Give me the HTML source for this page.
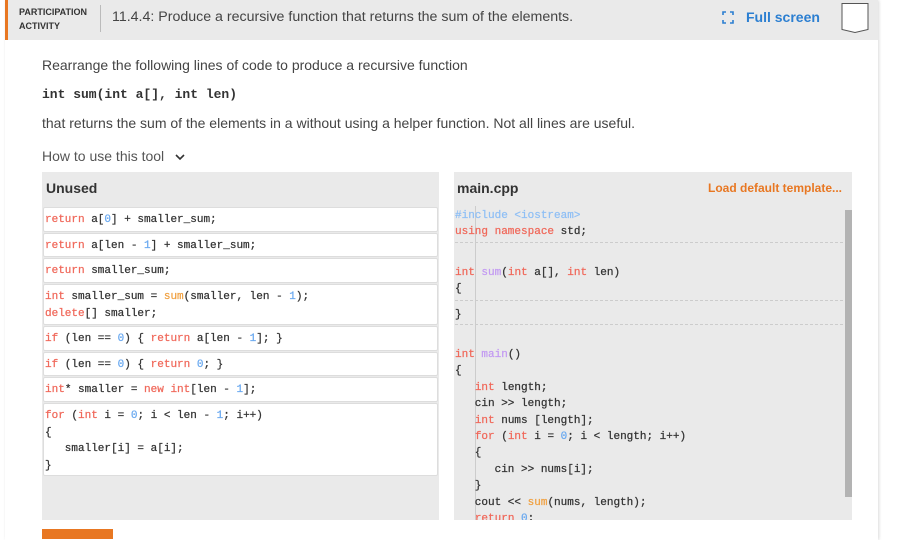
<!DOCTYPE html>
<html><head><meta charset="utf-8"><style>
*{margin:0;padding:0;box-sizing:border-box}
body{width:897px;height:536px;background:#fff;font-family:"Liberation Sans",sans-serif;position:relative;overflow:hidden;color:#333}
.card{position:absolute;left:5px;top:0;width:873px;height:540px;background:#fff;box-shadow:1px 0 3px rgba(0,0,0,.15)}
.hdr{position:absolute;left:5px;top:0;width:873px;height:40px;background:#eaeaea;border-left:3px solid #e87722}
.pa{position:absolute;left:19px;top:5px;font-size:9px;font-weight:bold;line-height:14px;color:#333}
.sep{position:absolute;left:100px;top:5px;width:1px;height:27px;background:#bbb}
.title{position:absolute;left:112px;top:9px;font-size:14.2px;color:#444}
.fs{position:absolute;left:746px;top:9px;font-size:14px;font-weight:bold;color:#2c7fd1}
.bm{position:absolute;left:841px;top:3px;width:28px;height:30px}
.t{position:absolute;left:42px;font-size:14px;color:#444}
.mono{font-family:"Liberation Mono",monospace}
.panel{position:absolute;top:172px;background:#eaeaea}
.ph{position:absolute;top:180px;font-size:14px;font-weight:bold;color:#333}
.item{position:absolute;left:43px;width:395px;background:#fff;border:1px solid #ddd;border-radius:2px;font-family:"Liberation Mono",monospace;font-size:11px;line-height:16.5px;padding:4px 1px 3px;white-space:pre;color:#333;-webkit-text-stroke:0.25px}
.k{color:#f0685a}.n{color:#6aa9f0}.f{color:#f0a040}.p{color:#c39af2}
.code{position:absolute;left:455px;font-family:"Liberation Mono",monospace;font-size:11px;white-space:pre;color:#333;line-height:16.4px;-webkit-text-stroke:0.25px}
.dash{position:absolute;left:455px;width:388px;border-top:1px dashed #ccc}
</style></head><body>
<div class="card"></div>
<div class="hdr"></div>
<div class="pa">PARTICIPATION<br>ACTIVITY</div>
<div class="sep"></div>
<div class="title">11.4.4: Produce a recursive function that returns the sum of the elements.</div>
<svg style="position:absolute;left:722px;top:11px" width="12" height="13" viewBox="0 0 12 13" fill="none" stroke="#2c7fd1" stroke-width="1.6"><path d="M1 4V1h3M8 1h3v3M11 9v3H8M4 12H1V9"/></svg>
<div class="fs">Full screen</div>
<svg class="bm" viewBox="0 0 28 30"><path d="M1 0.5h26v26l-13 3l-13-3z" fill="#fff" stroke="#555" stroke-width="1"/></svg>

<div class="t" style="top:57px">Rearrange the following lines of code to produce a recursive function</div>
<div class="t mono" style="top:87px;font-weight:bold;font-size:13px;color:#333">int sum(int a[], int len)</div>
<div class="t" style="top:115px">that returns the sum of the elements in a without using a helper function. Not all lines are useful.</div>
<div class="t" style="top:148px;color:#555">How to use this tool <svg width="12" height="8" viewBox="0 0 12 8" style="margin-left:6px"><path d="M2 2l4 4 4-4" stroke="#333" stroke-width="1.6" fill="none"/></svg></div>

<div class="panel" style="left:42px;width:397px;height:348px"></div>
<div class="ph" style="left:46px">Unused</div>
<div class="item" style="top:207px;height:25px"><span class="k">return</span> a[<span class="n">0</span>] + smaller_sum;</div>
<div class="item" style="top:233px;height:24px"><span class="k">return</span> a[len - <span class="n">1</span>] + smaller_sum;</div>
<div class="item" style="top:258px;height:25px"><span class="k">return</span> smaller_sum;</div>
<div class="item" style="top:284px;height:41px"><span class="k">int</span> smaller_sum = <span class="f">sum</span>(smaller, len - <span class="n">1</span>);
<span class="k">delete</span>[] smaller;</div>
<div class="item" style="top:326px;height:25px"><span class="k">if</span> (len == <span class="n">0</span>) { <span class="k">return</span> a[len - <span class="n">1</span>]; }</div>
<div class="item" style="top:352px;height:24px"><span class="k">if</span> (len == <span class="n">0</span>) { <span class="k">return</span> <span class="n">0</span>; }</div>
<div class="item" style="top:377px;height:25px"><span class="k">int</span>* smaller = <span class="k">new</span> <span class="k">int</span>[len - <span class="n">1</span>];</div>
<div class="item" style="top:403px;height:73px"><span class="k">for</span> (<span class="k">int</span> i = <span class="n">0</span>; i &lt; len - <span class="n">1</span>; i++)
{
   smaller[i] = a[i];
}</div>
<div style="position:absolute;left:42px;top:529px;width:71px;height:10px;background:#e87722"></div>

<div class="panel" style="left:454px;width:398px;height:348px"></div>
<div class="ph" style="left:457px">main.cpp</div>
<div style="position:absolute;left:708px;top:181px;font-size:12px;font-weight:bold;color:#e87722">Load default template...</div>
<div style="position:absolute;left:475px;top:206px;width:1px;height:314px;background:#ccc"></div>
<div style="position:absolute;left:845px;top:210px;width:7px;height:287px;background:#b3b3b3"></div>
<div class="code" style="top:208px"><span class="n" style="color:#8fbff5">#include &lt;iostream&gt;</span>
<span class="k">using namespace</span> std;</div>
<div class="dash" style="top:242px"></div>
<div class="code" style="top:265px"><span class="k">int</span> <span class="p">sum</span>(<span class="k">int</span> a[], <span class="k">int</span> len)
{</div>
<div class="dash" style="top:300px"></div>
<div class="code" style="top:307px">}</div>
<div class="dash" style="top:324px"></div>
<div class="code" style="top:347px;height:173px;overflow:hidden"><span class="k">int</span> <span class="p">main</span>()
{
   <span class="k">int</span> length;
   cin &gt;&gt; length;
   <span class="k">int</span> nums [length];
   <span class="k">for</span> (<span class="k">int</span> i = <span class="n">0</span>; i &lt; length; i++)
   {
      cin &gt;&gt; nums[i];
   }
   cout &lt;&lt; <span class="f">sum</span>(nums, length);
   <span class="k">return</span> <span class="n">0</span>;</div>
</body></html>
